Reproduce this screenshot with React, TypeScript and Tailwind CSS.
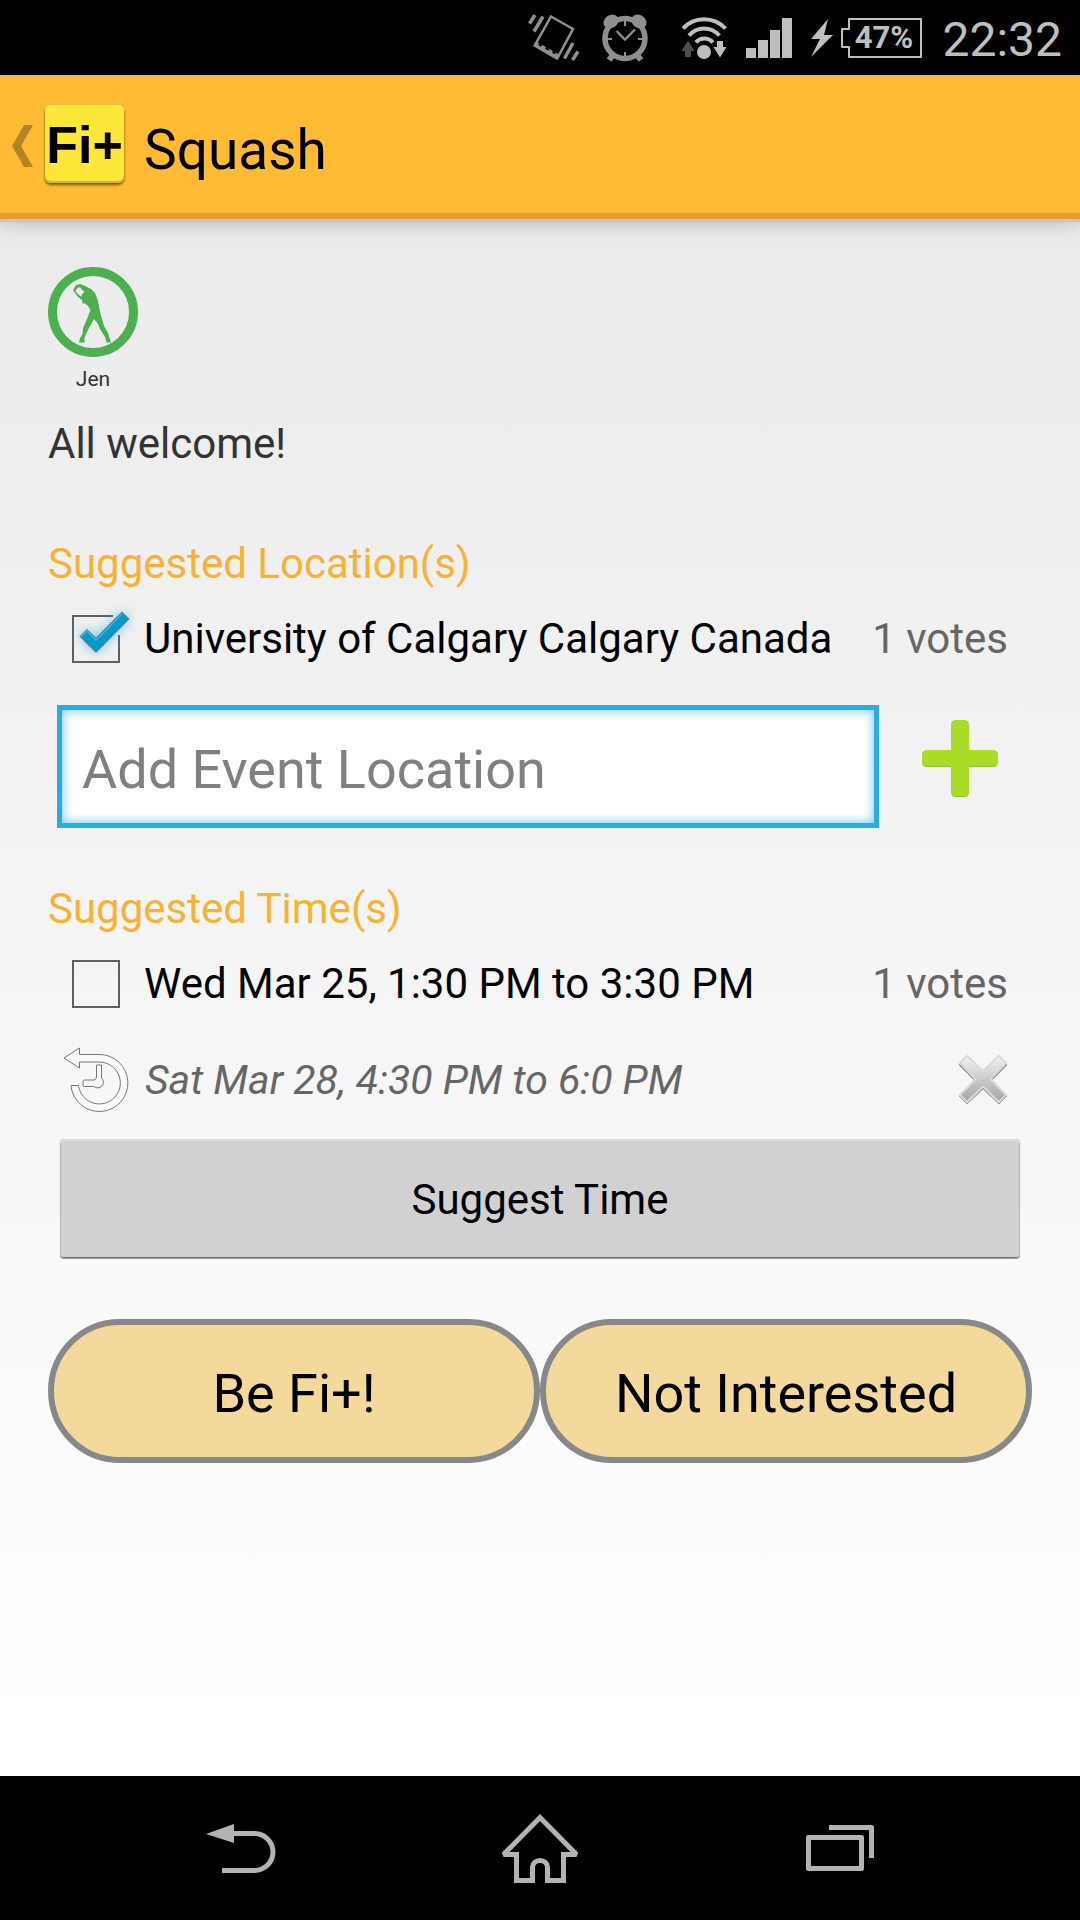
import { useState } from "react";

function StatusBar() {
  return (
    <header className="flex h-[75px] shrink-0 items-center justify-end bg-black pr-[18px] text-[#bfbfbf]">
      <svg width="52" height="48" viewBox="528 14 52 48" fill="none" stroke="#8f8f8f" aria-hidden="true">
        <path d="M551 16.5 L573 29 L557.5 58 L535 45 Z" strokeWidth="2.5" />
        <path d="M536 41.5 L560 55 L557 60 L533 46 Z" fill="#8f8f8f" stroke="none" />
        <path d="M538.5 44 L541.5 45.8 M545.5 47.8 L549 49.8 M552.5 51.8 L555.5 53.5" stroke="#000" strokeWidth="2" />
        <path d="M529.5 23.5 L535 15 M534 31.5 L543 16.5 M564.500 58.500 L573 43 M572.500 60 L578 51.500" strokeWidth="3.500" />
      </svg>
      <svg className="ml-[22px]" width="46" height="48" viewBox="602 14 46 48" fill="none" stroke="#8f8f8f" aria-hidden="true">
        <g fill="#8f8f8f" stroke="none">
          <ellipse cx="611" cy="21.500" rx="8" ry="6.500" transform="rotate(-35 611 21.500)" />
          <ellipse cx="639" cy="21.500" rx="8" ry="6.500" transform="rotate(35 639 21.500)" />
        </g>
        <circle cx="625" cy="38.500" r="20" strokeWidth="5.500" />
        <path d="M613 55 L609 60 M637 55 L641 60" strokeWidth="6" />
        <path d="M616.500 31 L625 39.500 L635 29.500" strokeWidth="2.300" />
        <path d="M625 21 V26 M625 52 V57 M607 39 H612 M638 39 H643" strokeWidth="2" />
      </svg>
      <svg className="ml-[33px]" width="46" height="44" viewBox="681 15 46 44" fill="none" stroke="#bfbfbf" aria-hidden="true">
        <path d="M683 27.500 C694 15 714 15 725.500 27.500 M689 34.500 C697 25 711 25 719.500 34.500 M696 41.500 C700 36 708.500 36 713 41.500" strokeWidth="4" />
        <circle cx="704" cy="51" r="7" fill="#bfbfbf" stroke="none" />
        <path d="M688 39.500 L694.500 50 H691 V56 H685 V50 H681.500 Z" fill="#4d4d4d" stroke="none" />
        <path d="M717 40 H723 V46 H726.500 L720 56.500 L713.500 46 H717 Z" fill="#bfbfbf" stroke="none" />
      </svg>
      <svg className="ml-[19px]" width="46" height="40" viewBox="0 0 46 40" fill="#bfbfbf" aria-hidden="true">
        <path d="M0 30h10v10H0zM12 22h10v18H12zM24 12h10v28H24zM36 0h10v40H36z" />
      </svg>
      <svg className="ml-[18px]" width="23" height="38" viewBox="0 0 23 38" fill="#bfbfbf" aria-hidden="true">
        <path d="M18 0 L1 20 H10 L1 38 L23 16 H14 Z" />
      </svg>
      <span className="relative ml-2 flex h-10 w-[81px] items-center justify-center pl-1 text-[31px] leading-none font-bold">
        <svg className="absolute inset-0" width="81" height="40" viewBox="0 0 81 40" fill="none" stroke="#bfbfbf" strokeWidth="2" aria-hidden="true">
          <path d="M8 1 H80 V39 H8 V29 H1 V11 H8 Z" strokeLinejoin="round" />
        </svg>
        47%
      </span>
      <time className="ml-5 pt-1 text-[48px] leading-none">22:32</time>
    </header>
  );
}

function ActionBar() {
  return (
    <div className="relative z-10 flex h-36 shrink-0 items-center border-b-6 border-[#dfa02d] bg-[#ffbb33] pl-3 shadow-[0_3px_0_#c4c4c4,0_4px_20px_rgba(0,0,0,0.22)]">
      <button type="button" aria-label="Navigate up" className="flex items-center">
        <svg className="mt-1" width="21" height="42" viewBox="0 0 21 42" fill="#b38324" aria-hidden="true">
          <path d="M12 0 H21 L9 21 L21 42 H12 L0 21 Z" />
        </svg>
        <span className="ml-3 flex h-[78px] w-[79px] items-center justify-center rounded-md bg-[#fde83a] pt-px font-['Liberation_Sans',sans-serif] text-[52px] leading-none font-bold text-black shadow-[inset_0_1px_1px_#fff59a,inset_0_-2px_1px_#c9b92e,0_2px_3px_rgba(0,0,0,0.55)]">
          Fi+
        </span>
      </button>
      <h1 className="ml-5 pt-[11px] text-[55px] leading-[60px] text-black">Squash</h1>
    </div>
  );
}

function Avatar({ name }: { name: string }) {
  return (
    <figure className="flex w-[90px] flex-col items-center">
      <svg width="90" height="90" viewBox="0 0 90 90" aria-hidden="true">
        <circle cx="45" cy="45" r="40.500" fill="none" stroke="#4caf50" strokeWidth="9" />
        <g fill="#4caf50">
          <path
            fillRule="evenodd"
            d="M25 23 L28 18 L32 17 L37 19 L43 22 L47 26 L50 34 L51.500 43 L54 52 L56 59 L60 66 L63 75.500 H58.500 L57 70 L52 62 L50 57 L46 52 L42 59 L38 67 L36.500 71 L36.500 75.500 H31 L32 71 L34.500 67 L35 61 L39 52 L42.500 43 L40 39 L36.500 36 L36 37 L34.500 36 L34 33 L30 30 Z M28 23 L27.500 24.500 L31 28 L34 30 L33.500 28 L36.500 24.500 L34 23 L32.500 20.500 L30 20.500 Z"
          />
        </g>
      </svg>
      <figcaption className="mt-[10px] text-[21px] leading-6">{name}</figcaption>
    </figure>
  );
}

function VoteRow({ label, votes, initial }: { label: string; votes: string; initial: boolean }) {
  const [checked, setChecked] = useState(initial);
  return (
    <div className="flex h-24 items-center justify-between px-6 text-[42px] leading-12">
      <label className="flex items-center gap-6 text-black">
        <span className="relative size-12 shrink-0">
          <input
            type="checkbox"
            checked={checked}
            onChange={(e) => setChecked(e.target.checked)}
            className="block size-12 appearance-none border-2 border-[#606060] checked:border-transparent"
          />
          {checked && (
            <svg
              className="pointer-events-none absolute inset-0 overflow-visible"
              width="48"
              height="48"
              viewBox="0 0 48 48"
              fill="none"
              aria-hidden="true"
            >
              <path d="M41 1 H1 V47 H47 V20" stroke="#606060" strokeWidth="2" />
              <path
                className="drop-shadow-[0_0_6px_#33b5e5aa]"
                d="M8.500 21.500 L15 15 L24 23.500 L50 -2.500 L56.500 4 L24 37 Z"
                fill="#0099cc"
                stroke="#4a8298"
                strokeWidth="1.500"
              />
              <path d="M9 21.500 L15 16 L24 25 L50 -1" stroke="#45b4db" strokeWidth="1.500" />
            </svg>
          )}
        </span>
        {label}
      </label>
      <span className="shrink-0 text-[#666]">{votes}</span>
    </div>
  );
}

function SectionTitle({ children }: { children: string }) {
  return <h2 className="text-[42px] leading-12 text-[#f5b335]">{children}</h2>;
}

function NavBar() {
  return (
    <nav className="grid h-36 shrink-0 grid-cols-3 bg-black px-[90px]">
      <button type="button" aria-label="Back" className="flex items-center justify-center">
        <svg width="80" height="80" viewBox="200 1808 80 80" fill="none" stroke="#b3b3b3" strokeWidth="5" aria-hidden="true">
          <path d="M232 1833.500 H254.500 a18.500 18.500 0 0 1 0 37 H222" />
          <path d="M206 1834 L234 1824 V1843 Z" fill="#b3b3b3" stroke="none" />
        </svg>
      </button>
      <button type="button" aria-label="Home" className="flex items-center justify-center">
        <svg width="80" height="80" viewBox="500 1808 80 80" fill="none" stroke="#b3b3b3" strokeWidth="5" aria-hidden="true">
          <path d="M540 1817.500 L576.500 1854.500 H563.500 V1880.500 H547.500 V1867 a7.500 6.500 0 0 0 -15 0 V1880.500 H516.500 V1854.500 H503.500 Z" strokeLinejoin="miter" strokeMiterlimit="2" />
        </svg>
      </button>
      <button type="button" aria-label="Recent apps" className="flex items-center justify-center">
        <svg width="80" height="80" viewBox="800 1808 80 80" fill="none" stroke="#b3b3b3" strokeWidth="5" aria-hidden="true">
          <path d="M808.500 1837.500 H861.500 V1868.500 H808.500 Z M829 1827.500 H871.500 V1858" strokeLinejoin="round" />
        </svg>
      </button>
    </nav>
  );
}

export default function App() {
  const [place, setPlace] = useState("");
  return (
    <div className="flex min-h-screen flex-col bg-[linear-gradient(to_bottom,#e8e8e8,#ffffff_90%)] font-[Roboto,sans-serif] text-[#333]">
      <StatusBar />
      <ActionBar />
      <main className="flex grow flex-col px-12 pt-12 pb-12">
        <Avatar name="Jen" />
        <p className="mt-[29px] text-[42px] leading-12">All welcome!</p>

        <section className="mt-[72px]">
          <SectionTitle>Suggested Location(s)</SectionTitle>
          <div className="mt-[3px]">
            <VoteRow label="University of Calgary Calgary Canada" votes="1 votes" initial={true} />
          </div>
          <form className="mt-[18px] flex items-start pl-[9px]" onSubmit={(e) => e.preventDefault()}>
            <input
              type="text"
              aria-label="Add Event Location"
              placeholder="Add Event Location"
              value={place}
              onChange={(e) => setPlace(e.target.value)}
              className="h-[123px] min-w-0 grow border-5 border-[#2aabe4] bg-white px-5 pt-[6px] text-[54px] text-black shadow-[inset_0_0_10px_2px_#8fd3f1] outline-none placeholder:text-[#808080]"
            />
            <button type="submit" aria-label="Add location" className="flex h-[108px] w-[153px] shrink-0 items-center justify-center pl-[9px]">
              <svg width="78" height="78" viewBox="0 0 78 78" aria-hidden="true">
                <path d="M35 2 H43 Q48 2 48 7 V31 H72 Q77 31 77 36 V42 Q77 47 72 47 H48 V72 Q48 77 43 77 H35 Q30 77 30 72 V47 H6 Q1 47 1 42 V36 Q1 31 6 31 H30 V7 Q30 2 35 2 Z" fill="#98c423" />
                <path d="M35 0 H43 Q48 0 48 5 V30 H72 Q77 30 77 35 V41 Q77 46 72 46 H48 V71 Q48 76 43 76 H35 Q30 76 30 71 V46 H6 Q1 46 1 41 V35 Q1 30 6 30 H30 V5 Q30 0 35 0 Z" fill="#a9dc26" />
              </svg>
            </button>
          </form>
        </section>

        <section className="mt-[57px]">
          <SectionTitle>Suggested Time(s)</SectionTitle>
          <div className="mt-[3px]">
            <VoteRow label="Wed Mar 25, 1:30 PM to 3:30 PM" votes="1 votes" initial={false} />
            <div className="flex h-24 items-center pr-6 pl-[15px] text-[41px] leading-12 text-[#666] italic">
              <svg width="66" height="66" viewBox="0 0 66 66" fill="#fafafa" stroke="#777" strokeWidth="1" strokeLinejoin="round" aria-hidden="true">
                <path d="M1 11 L16.500 1 V7.500 H36 A28.500 28.500 0 1 1 8 38.500 H15.500 A21 21 0 1 0 36 15 H16.500 V21 Z" />
                <path d="M33.500 18 H38.500 V31 A5.500 5.500 0 1 1 31 39.500 H21 Q20 39.500 20 38 V35 Q20 33 21.500 33 H31 Q33 33 33.500 30 Z" />
              </svg>
              <span className="ml-4 grow">Sat Mar 28, 4:30 PM to 6:0 PM</span>
              <button type="button" aria-label="Remove suggested time">
                <svg width="50" height="52" viewBox="0 0 50 52" aria-hidden="true">
                  <defs>
                    <linearGradient id="cross" x1="0" y1="0" x2="0" y2="1">
                      <stop offset="0" stopColor="#f2f2f2" />
                      <stop offset="1" stopColor="#a3a3a3" />
                    </linearGradient>
                  </defs>
                  <path d="M9 4 L25 19 L41 4 L49 11 L34 26 L49 42 L41 50 L25 35 L9 50 L1 42 L16 26 L1 11 Z" fill="#999" stroke="#999" strokeWidth="1" strokeLinejoin="round" />
                  <path d="M9 2 L25 17 L41 2 L48 9 L32.500 25 L48 41 L41 48 L25 32.500 L9 48 L2 41 L17.500 25 L2 9 Z" fill="url(#cross)" stroke="#dadada" strokeWidth="2" strokeLinejoin="round" />
                </svg>
              </button>
            </div>
          </div>
          <div className="mt-[11px] px-3">
            <button
              type="button"
              className="h-[119px] w-full rounded-[4px] bg-[#d1d1d1] pt-[3px] text-[42px] leading-12 text-black shadow-[inset_0_2px_0_#dcdcdc,inset_1px_0_0_#bbb,inset_-1px_0_0_#bbb,inset_0_-1px_0_#6b6b6b,0_1px_1px_#999]"
            >
              Suggest Time
            </button>
          </div>
        </section>

        <div className="mt-[61px] grid grid-cols-2 text-[54px] leading-[60px] text-black">
          <button type="button" className="h-36 rounded-full border-6 border-[#888] bg-[#f4d99c] pt-[6px]">
            Be Fi+!
          </button>
          <button type="button" className="h-36 rounded-full border-6 border-[#888] bg-[#f4d99c] pt-[6px]">
            Not Interested
          </button>
        </div>
      </main>
      <NavBar />
    </div>
  );
}
